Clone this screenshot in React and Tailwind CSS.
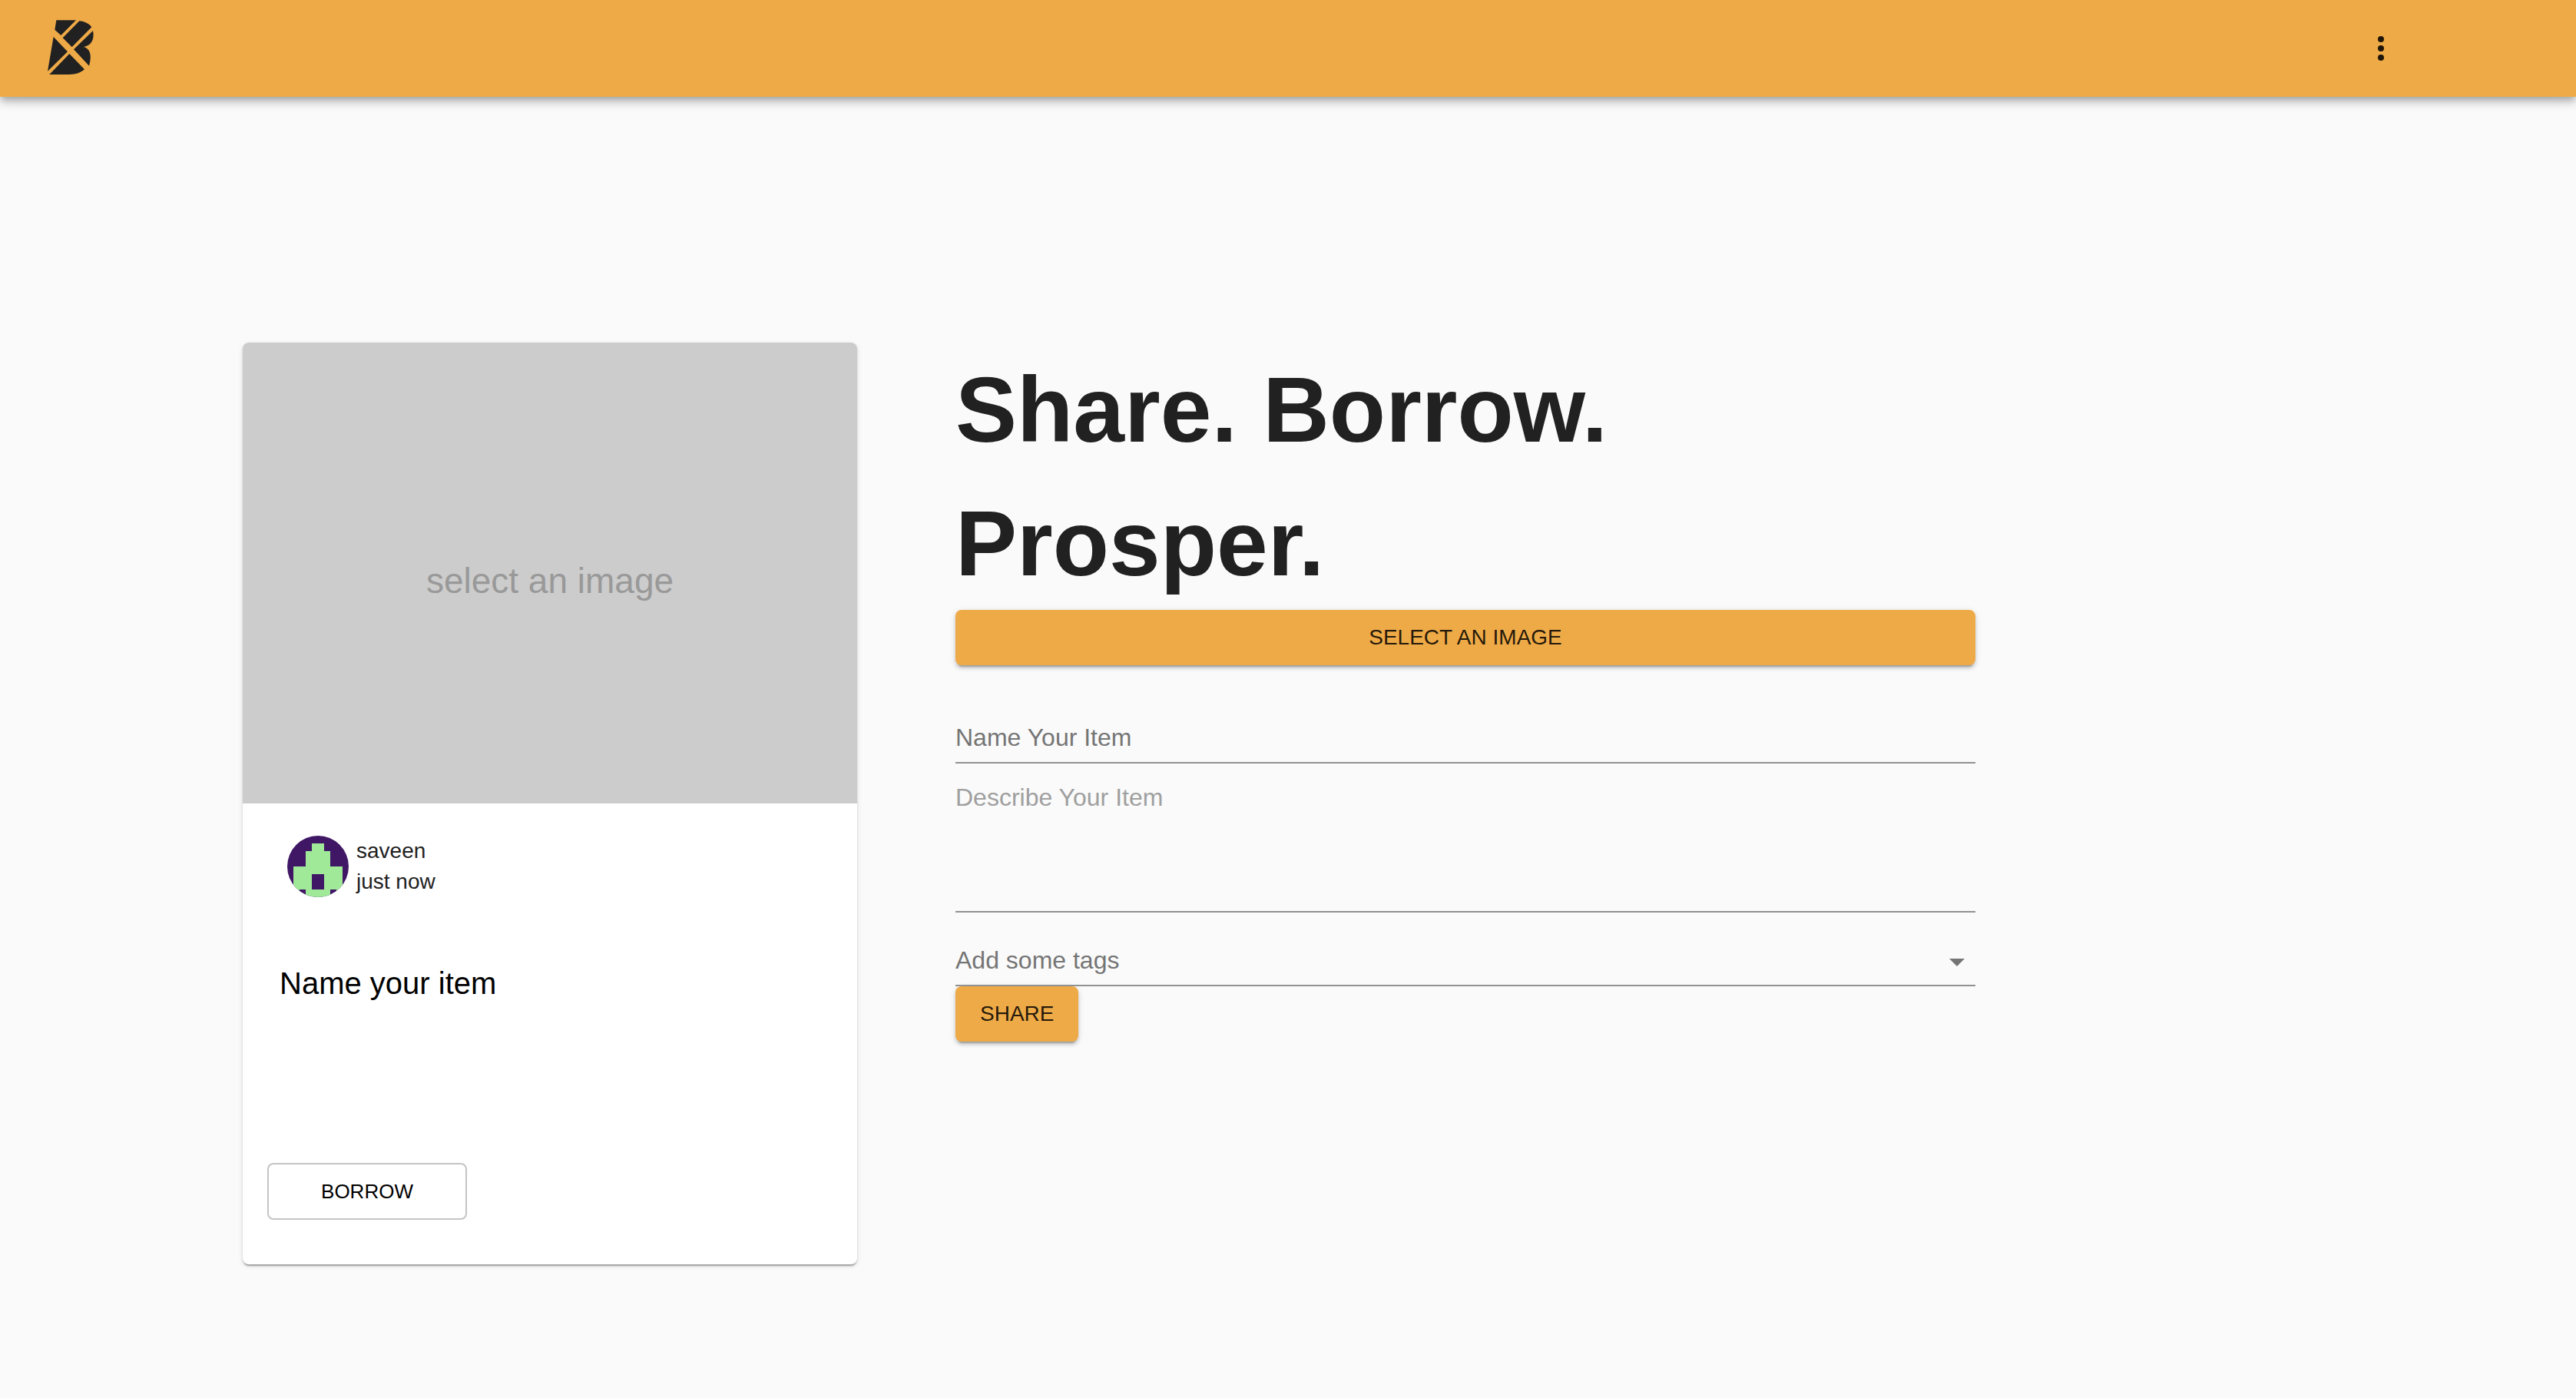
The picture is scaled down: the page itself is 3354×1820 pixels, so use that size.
import React from "react";

const appBarShadow =
  "shadow-[0_4px_8px_-2px_rgba(0,0,0,0.2),0_8px_10px_0_rgba(0,0,0,0.14),0_2px_20px_0_rgba(0,0,0,0.12)]";
const cardShadow =
  "shadow-[0_4px_2px_-2px_rgba(0,0,0,0.2),0_2px_2px_0_rgba(0,0,0,0.14),0_2px_6px_0_rgba(0,0,0,0.12)]";
const buttonShadow =
  "shadow-[0_6px_2px_-4px_rgba(0,0,0,0.2),0_4px_4px_0_rgba(0,0,0,0.14),0_2px_10px_0_rgba(0,0,0,0.12)]";
const fieldBase =
  "block w-full border-b-2 border-[#919191] bg-transparent pt-3 text-[32px] leading-10 outline-none";

function Logo() {
  return (
    <svg viewBox="60 48 192 222" className="h-[74px] w-16 fill-[#212121]" aria-hidden="true">
      <path d="M100 49H177L118 108L94 86Z" />
      <path d="M190 52C210 54 227 61 238 76L161 154L125 118Z" />
      <path d="M243 90C250 122 238 148 207 153C230 160 241 182 228 227L168 163Z" />
      <path d="M89 114L144 172L66 248Z" />
      <path d="M151 180L210 241C196 254 175 261 150 261H73Z" />
    </svg>
  );
}

function Header() {
  return (
    <header
      className={`relative flex h-[126px] items-center justify-between bg-[#eeaa47] pl-[60px] pr-[206px] ${appBarShadow}`}
    >
      <a href="#home" aria-label="Home">
        <Logo />
      </a>
      <button type="button" aria-label="More options" className="rounded-full p-6">
        <svg viewBox="0 0 24 24" className="size-12 fill-black/87" aria-hidden="true">
          <circle cx="12" cy="6" r="2" />
          <circle cx="12" cy="12" r="2" />
          <circle cx="12" cy="18" r="2" />
        </svg>
      </button>
    </header>
  );
}

function Avatar() {
  return (
    <svg
      viewBox="0 0 240 240"
      className="size-20 rounded-full bg-[#3f1765]"
      shapeRendering="crispEdges"
      aria-hidden="true"
    >
      <path
        fill="#a0e999"
        d="M96 30H144V60H168V120H216V240H192V210H168V240H72V210H48V240H24V120H72V60H96Z"
      />
      <path fill="#3f1765" d="M96 150H144V210H96Z" />
    </svg>
  );
}

function ItemCard() {
  return (
    <article
      className={`flex min-h-[1200px] w-[800px] shrink-0 flex-col overflow-hidden rounded-lg bg-white ${cardShadow}`}
    >
      <div className="flex h-[600px] items-center justify-center bg-[#cccccc]">
        <span className="pt-5 text-[46px] leading-16 text-[#999999]">select an image</span>
      </div>
      <div className="flex gap-[10px] pl-[58px] pt-[42px] text-[28px] leading-10 text-[#212121]">
        <Avatar />
        <div>
          <p>saveen</p>
          <p>just now</p>
        </div>
      </div>
      <h2 className="mt-[88px] px-12 text-[40px] leading-12 text-black">Name your item</h2>
      <div className="mt-auto px-8 pb-[58px]">
        <button
          type="button"
          className="h-[74px] w-[260px] rounded-lg border-2 border-[#c4c4c4] text-[26px] text-black"
        >
          BORROW
        </button>
      </div>
    </article>
  );
}

function ShareForm() {
  return (
    <form className="max-w-[1328px] flex-1" onSubmit={(e) => e.preventDefault()}>
      <h1 className="max-w-[900px] text-[120px] font-bold leading-[174px] text-[#212121]">
        Share. Borrow. Prosper.
      </h1>
      <button
        type="button"
        className={`block h-18 w-full rounded-lg bg-[#eeaa47] text-[28px] text-black/87 ${buttonShadow}`}
      >
        SELECT AN IMAGE
      </button>
      <input
        type="text"
        aria-label="Name Your Item"
        placeholder="Name Your Item"
        className={`mt-[62px] pb-3 placeholder:text-[#757575] ${fieldBase}`}
      />
      <textarea
        rows={4}
        aria-label="Describe Your Item"
        placeholder="Describe Your Item"
        className={`mt-3 resize-none pb-2 placeholder:text-[#9f9f9f] ${fieldBase}`}
      />
      <div className="relative mt-[30px]">
        <select
          aria-label="Add some tags"
          defaultValue=""
          className={`appearance-none pb-3 text-[#757575] ${fieldBase}`}
        >
          <option value="">Add some tags</option>
        </select>
        <svg
          viewBox="0 0 24 24"
          className="pointer-events-none absolute right-0 top-[10px] size-12 fill-[#757575]"
          aria-hidden="true"
        >
          <path d="M7 10l5 5 5-5z" />
        </svg>
      </div>
      <button
        type="submit"
        className={`block h-18 rounded-lg bg-[#eeaa47] px-8 text-[28px] text-black/87 ${buttonShadow}`}
      >
        SHARE
      </button>
    </form>
  );
}

export default function App() {
  return (
    <div className="min-h-screen bg-[#fafafa] font-['Liberation_Sans',Arial,sans-serif]">
      <Header />
      <main className="flex items-start gap-32 px-[316px] pb-40 pt-80">
        <ItemCard />
        <ShareForm />
      </main>
    </div>
  );
}
